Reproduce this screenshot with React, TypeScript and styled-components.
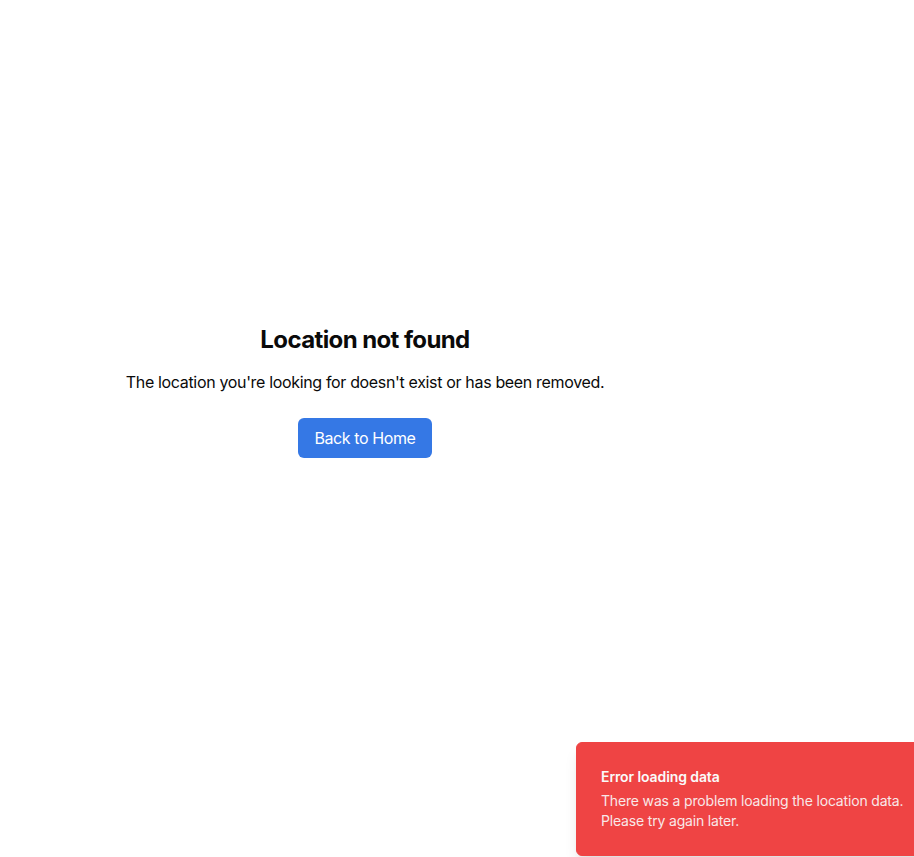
import React from "react";
import styled, { createGlobalStyle } from "styled-components";

const Global = createGlobalStyle`
  html, body { margin: 0; padding: 0; background: #ffffff; }
  body { font-family: Inter, "Noto Sans", sans-serif; color: #0a0a0a; overflow: hidden; }
  * { box-sizing: border-box; }
`;

const Page = styled.div`
  position: relative;
  width: 914px;
  height: 857px;
  display: flex;
  overflow: hidden;
`;

const Main = styled.main`
  width: 730px;
  display: flex;
  flex-direction: column;
  align-items: center;
  padding-top: 324px;
`;

const Aside = styled.div`
  flex: 1;
`;

const Title = styled.h1`
  margin: 0 0 14px;
  font-size: 24px;
  line-height: 32px;
  font-weight: 700;
  letter-spacing: -0.6px;
  color: #0a0a0a;
`;

const Message = styled.p`
  margin: 0 0 24px;
  font-size: 16px;
  line-height: 24px;
  letter-spacing: -0.34px;
  color: #0a0a0a;
`;

const Button = styled.button`
  height: 40px;
  padding: 0 16px;
  border: none;
  border-radius: 6px;
  background: #3578e5;
  color: #ffffff;
  font-family: inherit;
  font-size: 16px;
  line-height: 24px;
  letter-spacing: -0.4px;
  cursor: pointer;
`;

const Toast = styled.div`
  position: absolute;
  left: 576px;
  top: 742px;
  width: 388px;
  padding: 24px 32px 24px 24px;
  border: 1px solid #ef4444;
  border-radius: 6px;
  background: #ef4444;
  color: #fafafa;
  display: grid;
  gap: 4px;
  box-shadow: 0 10px 15px -3px rgba(0,0,0,0.1), 0 4px 6px -4px rgba(0,0,0,0.1);
`;

const ToastTitle = styled.div`
  font-size: 14px;
  line-height: 20px;
  font-weight: 600;
  letter-spacing: -0.1px;
`;

const ToastText = styled.div`
  font-size: 14px;
  line-height: 20px;
  letter-spacing: -0.17px;
  opacity: 0.9;
`;

export default function App() {
  return (
    <>
      <Global />
      <Page>
        <Main>
          <Title>Location not found</Title>
          <Message>The location you're looking for doesn't exist or has been removed.</Message>
          <Button>Back to Home</Button>
        </Main>
        <Aside />
        <Toast role="status">
          <ToastTitle>Error loading data</ToastTitle>
          <ToastText>There was a problem loading the location data. Please try again later.</ToastText>
        </Toast>
      </Page>
    </>
  );
}
